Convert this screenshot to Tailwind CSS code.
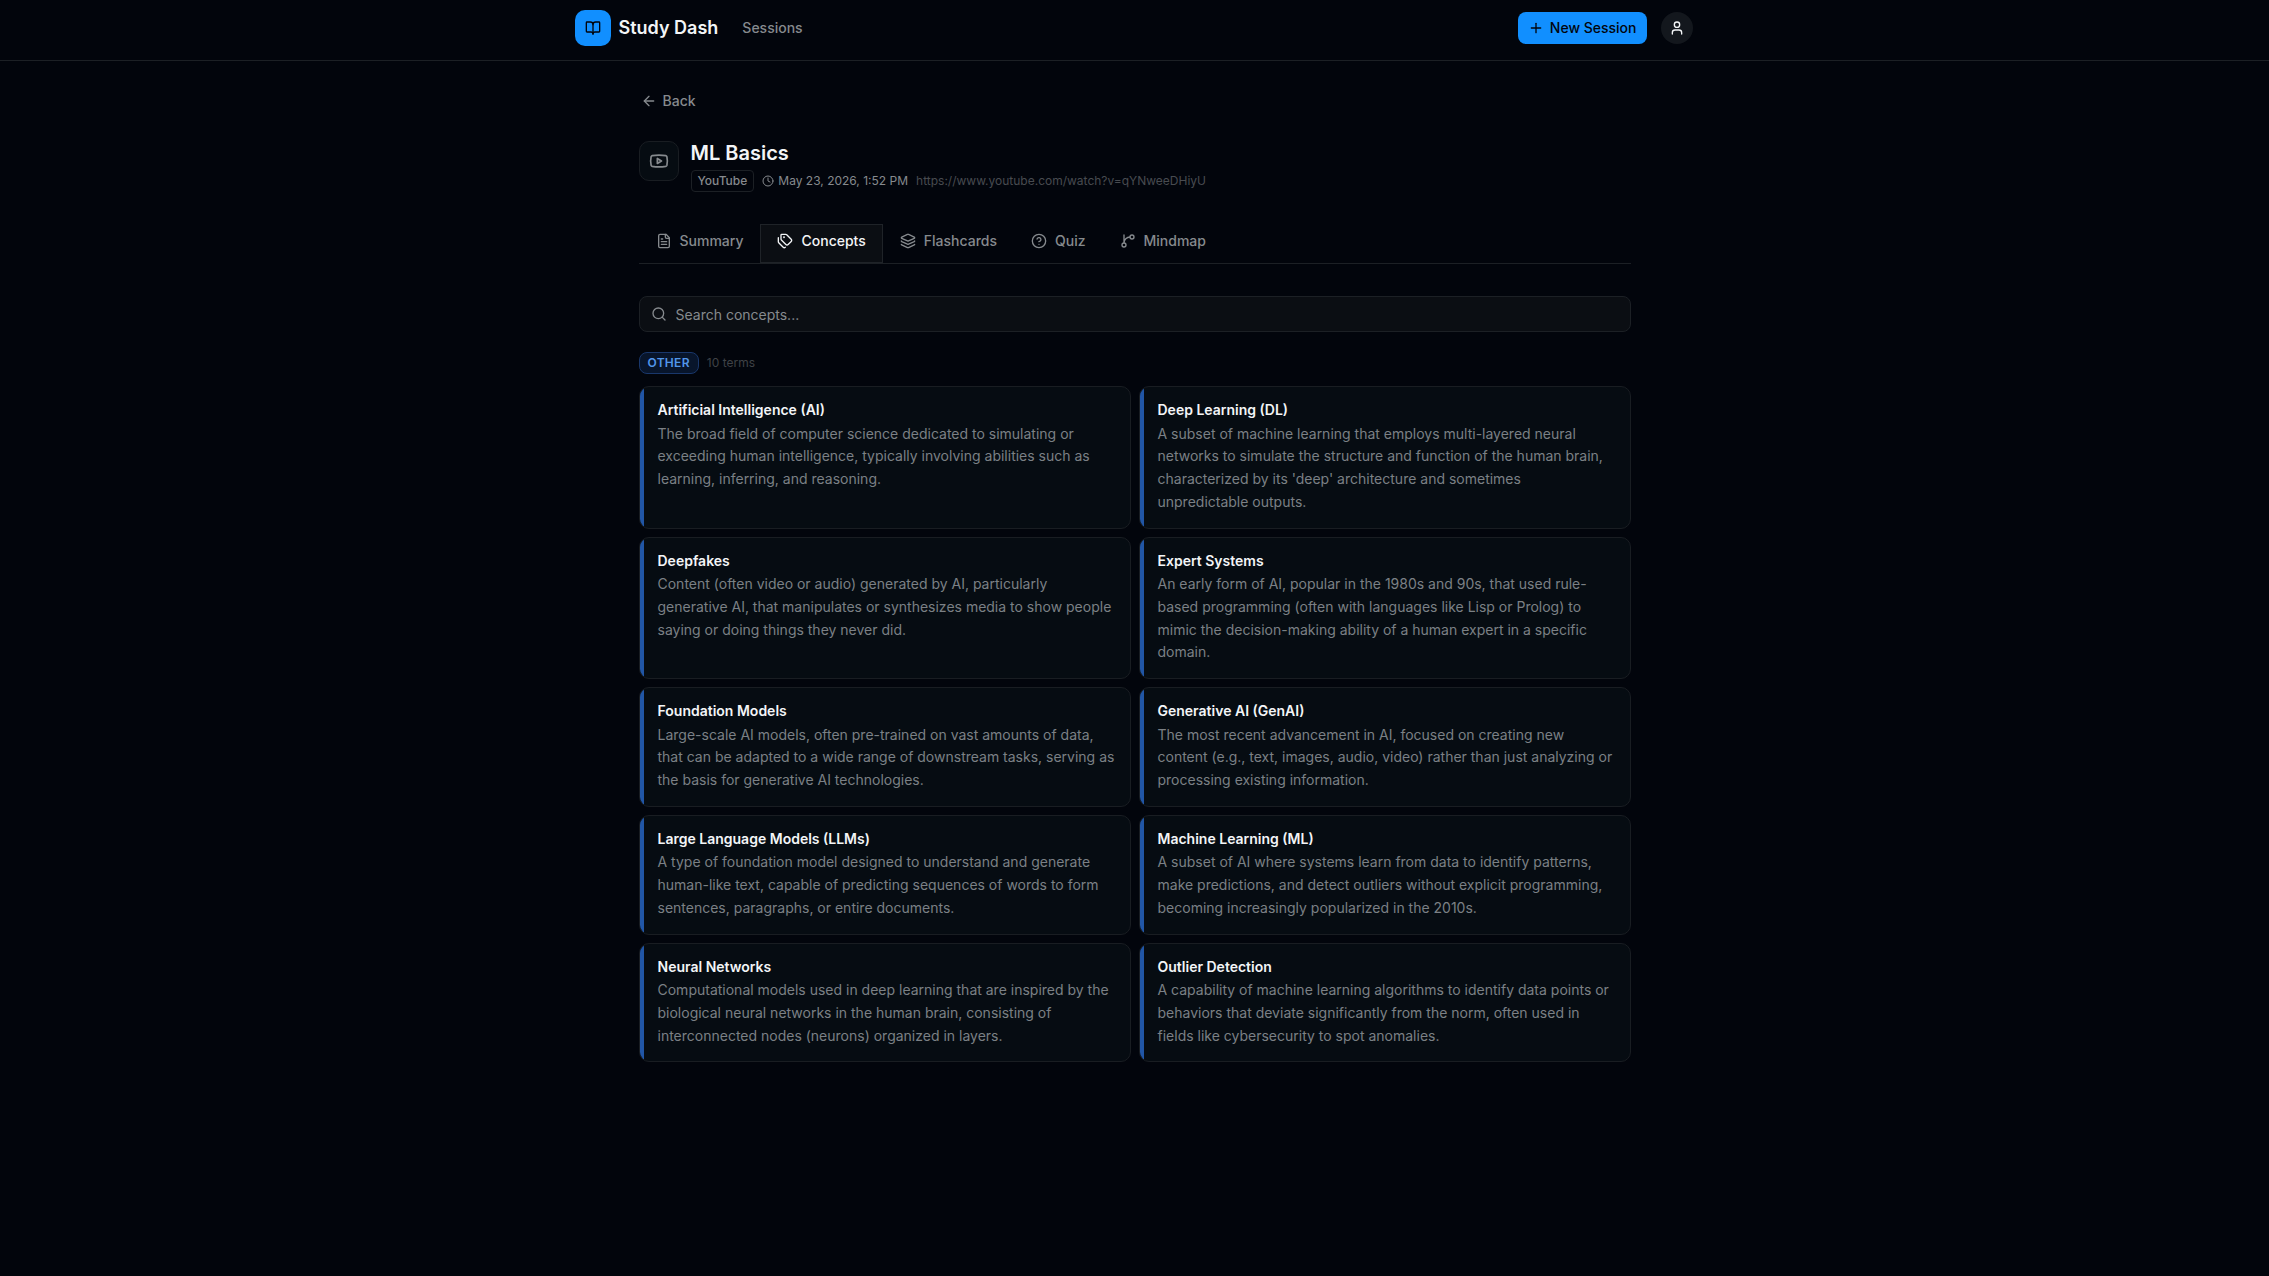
<!DOCTYPE html>
<html lang="en">
<head>
  <meta charset="UTF-8" />
  <meta name="viewport" content="width=device-width, initial-scale=1.0" />
  <title>ML Basics | Study Dash</title>
  <script src="https://cdn.jsdelivr.net/npm/@tailwindcss/browser@4"></script>
</head>
<body class="min-h-screen bg-[#02050c] font-['Inter',sans-serif] text-sm text-[#868a8e] antialiased">

  <!-- Navbar -->
  <header class="border-b border-[#1c2025] pb-1">
    <div class="max-w-6xl mx-auto h-14 pl-4 pr-[18px] flex items-center justify-between">
      <div class="flex items-center gap-6">
        <a href="#" class="flex items-center gap-2 text-lg font-semibold text-[#f3f5f7]">
          <span class="size-9 rounded-[10px] bg-[#118fff] text-[#02050c] flex items-center justify-center">
            <svg class="size-4" viewBox="0 0 24 24" fill="none" stroke="currentColor" stroke-width="2" stroke-linecap="round" stroke-linejoin="round"><path d="M12 7v14"/><path d="M3 18a1 1 0 0 1-1-1V4a1 1 0 0 1 1-1h5a4 4 0 0 1 4 4 4 4 0 0 1 4-4h5a1 1 0 0 1 1 1v13a1 1 0 0 1-1 1h-6a3 3 0 0 0-3 3 3 3 0 0 0-3-3z"/></svg>
          </span>
          Study Dash
        </a>
        <nav>
          <a href="#" class="font-medium hover:text-white">Sessions</a>
        </nav>
      </div>
      <div class="flex items-center gap-3.5">
        <button class="h-8 px-2.5 rounded-lg bg-[#118fff] text-[#02050c] font-medium flex items-center gap-1.5">
          <svg class="size-4" viewBox="0 0 24 24" fill="none" stroke="currentColor" stroke-width="2" stroke-linecap="round" stroke-linejoin="round"><path d="M5 12h14"/><path d="M12 5v14"/></svg>
          New Session
        </button>
        <button aria-label="Account" class="size-8 rounded-full bg-[#13171d] text-[#f3f5f7] flex items-center justify-center">
          <svg class="size-4" viewBox="0 0 24 24" fill="none" stroke="currentColor" stroke-width="2" stroke-linecap="round" stroke-linejoin="round"><path d="M19 21v-2a4 4 0 0 0-4-4H9a4 4 0 0 0-4 4v2"/><circle cx="12" cy="7" r="4"/></svg>
        </button>
      </div>
    </div>
  </header>

  <main class="max-w-5xl mx-auto px-4 py-6">
    <a href="#" class="w-fit h-8 flex items-center gap-1.5 px-0.5 font-medium hover:text-white">
      <svg class="size-4" viewBox="0 0 24 24" fill="none" stroke="currentColor" stroke-width="2" stroke-linecap="round" stroke-linejoin="round"><path d="m12 19-7-7 7-7"/><path d="M19 12H5"/></svg>
      Back
    </a>

    <!-- Session title -->
    <div class="mt-6 flex items-start gap-3">
      <div class="size-10 rounded-[10px] border border-[#191d22] bg-[#060c12] flex items-center justify-center">
        <svg class="size-5" viewBox="0 0 24 24" fill="none" stroke="currentColor" stroke-width="2" stroke-linecap="round" stroke-linejoin="round"><path d="M2.5 17a24.12 24.12 0 0 1 0-10 2 2 0 0 1 1.4-1.4 49.56 49.56 0 0 1 16.2 0A2 2 0 0 1 21.5 7a24.12 24.12 0 0 1 0 10 2 2 0 0 1-1.4 1.4 49.55 49.55 0 0 1-16.2 0A2 2 0 0 1 2.5 17"/><path d="m10 15 5-3-5-3z"/></svg>
      </div>
      <div>
        <h1 class="text-xl leading-tight font-semibold text-[#f3f5f7]">ML Basics</h1>
        <div class="mt-1 flex items-center gap-2 text-xs">
          <span class="h-[22px] px-1.5 rounded-sm border border-[#1c2025] font-medium flex items-center">YouTube</span>
          <span class="flex items-center gap-1">
            <svg class="size-3" viewBox="0 0 24 24" fill="none" stroke="currentColor" stroke-width="2" stroke-linecap="round" stroke-linejoin="round"><circle cx="12" cy="12" r="10"/><path d="M12 6v6l4 2"/></svg>
            May 23, 2026, 1:52 PM
          </span>
          <a href="#" class="text-[#484b50]">https://www.youtube.com/watch?v=qYNweeDHiyU</a>
        </div>
      </div>
    </div>

    <!-- Tabs -->
    <nav class="mt-8 flex border-b border-[#1c2025] font-medium">
      <button class="h-[39px] px-4 pb-1.5 border border-transparent flex items-center gap-2">
        <svg class="size-4" viewBox="0 0 24 24" fill="none" stroke="currentColor" stroke-width="2" stroke-linecap="round" stroke-linejoin="round"><path d="M15 2H6a2 2 0 0 0-2 2v16a2 2 0 0 0 2 2h12a2 2 0 0 0 2-2V7Z"/><path d="M14 2v4a2 2 0 0 0 2 2h4"/><path d="M10 9H8"/><path d="M16 13H8"/><path d="M16 17H8"/></svg>
        Summary
      </button>
      <button class="h-[39px] px-4 pb-1.5 border border-[#1f2328] bg-[#0b0e13] text-[#f3f5f7] flex items-center gap-2">
        <svg class="size-4" viewBox="0 0 24 24" fill="none" stroke="currentColor" stroke-width="2" stroke-linecap="round" stroke-linejoin="round"><path d="M13.172 2a2 2 0 0 1 1.414.586l6.71 6.71a2.4 2.4 0 0 1 0 3.408l-4.592 4.592a2.4 2.4 0 0 1-3.408 0l-6.71-6.71A2 2 0 0 1 6 9.172V3a1 1 0 0 1 1-1z"/><path d="M2 7v6.172a2 2 0 0 0 .586 1.414l6.71 6.71a2.4 2.4 0 0 0 3.191.193"/><circle cx="10.5" cy="6.5" r=".5" fill="currentColor"/></svg>
        Concepts
      </button>
      <button class="h-[39px] px-4 pb-1.5 border border-transparent flex items-center gap-2">
        <svg class="size-4" viewBox="0 0 24 24" fill="none" stroke="currentColor" stroke-width="2" stroke-linecap="round" stroke-linejoin="round"><path d="M12.83 2.18a2 2 0 0 0-1.66 0L2.6 6.08a1 1 0 0 0 0 1.83l8.58 3.91a2 2 0 0 0 1.66 0l8.58-3.9a1 1 0 0 0 0-1.83z"/><path d="M2 12a1 1 0 0 0 .58.91l8.6 3.91a2 2 0 0 0 1.65 0l8.58-3.9A1 1 0 0 0 22 12"/><path d="M2 17a1 1 0 0 0 .58.91l8.6 3.91a2 2 0 0 0 1.65 0l8.58-3.9A1 1 0 0 0 22 17"/></svg>
        Flashcards
      </button>
      <button class="h-[39px] px-4 pb-1.5 border border-transparent flex items-center gap-2">
        <svg class="size-4" viewBox="0 0 24 24" fill="none" stroke="currentColor" stroke-width="2" stroke-linecap="round" stroke-linejoin="round"><circle cx="12" cy="12" r="10"/><path d="M9.09 9a3 3 0 0 1 5.83 1c0 2-3 3-3 3"/><path d="M12 17h.01"/></svg>
        Quiz
      </button>
      <button class="h-[39px] px-4 pb-1.5 border border-transparent flex items-center gap-2">
        <svg class="size-4" viewBox="0 0 24 24" fill="none" stroke="currentColor" stroke-width="2" stroke-linecap="round" stroke-linejoin="round"><path d="M15 6a9 9 0 0 0-9 9V3"/><circle cx="18" cy="6" r="3"/><circle cx="6" cy="18" r="3"/></svg>
        Mindmap
      </button>
    </nav>

    <!-- Search -->
    <div class="relative mt-8">
      <svg class="absolute left-3 top-2.5 size-4" viewBox="0 0 24 24" fill="none" stroke="currentColor" stroke-width="2" stroke-linecap="round" stroke-linejoin="round"><circle cx="11" cy="11" r="8"/><path d="m21 21-4.3-4.3"/></svg>
      <input type="text" aria-label="Search concepts" placeholder="Search concepts..." class="w-full h-9 pl-9 pr-3 rounded-lg border border-[#1c2025] bg-[#0b0e13] text-[#f3f5f7] placeholder:text-[#868a8e] outline-none block" />
    </div>

    <div class="mt-5 flex items-center gap-2 text-xs">
      <span class="h-[22px] px-2 rounded-lg border border-[#19376b] bg-[#08152b] text-[#5296ea] font-semibold tracking-wide flex items-center">OTHER</span>
      <span class="text-[#3f4246]">10 terms</span>
    </div>

    <div class="mt-3 grid grid-cols-1 md:grid-cols-2 gap-2" id="concepts"></div>
  </main>

  <script>
    const concepts = [
      { term: "Artificial Intelligence (AI)", text: "The broad field of computer science dedicated to simulating or exceeding human intelligence, typically involving abilities such as learning, inferring, and reasoning." },
      { term: "Deep Learning (DL)", text: "A subset of machine learning that employs multi-layered neural networks to simulate the structure and function of the human brain, characterized by its 'deep' architecture and sometimes unpredictable outputs." },
      { term: "Deepfakes", text: "Content (often video or audio) generated by AI, particularly generative AI, that manipulates or synthesizes media to show people saying or doing things they never did." },
      { term: "Expert Systems", text: "An early form of AI, popular in the 1980s and 90s, that used rule-based programming (often with languages like Lisp or Prolog) to mimic the decision-making ability of a human expert in a specific domain." },
      { term: "Foundation Models", text: "Large-scale AI models, often pre-trained on vast amounts of data, that can be adapted to a wide range of downstream tasks, serving as the basis for generative AI technologies." },
      { term: "Generative AI (GenAI)", text: "The most recent advancement in AI, focused on creating new content (e.g., text, images, audio, video) rather than just analyzing or processing existing information." },
      { term: "Large Language Models (LLMs)", text: "A type of foundation model designed to understand and generate human-like text, capable of predicting sequences of words to form sentences, paragraphs, or entire documents." },
      { term: "Machine Learning (ML)", text: "A subset of AI where systems learn from data to identify patterns, make predictions, and detect outliers without explicit programming, becoming increasingly popularized in the 2010s." },
      { term: "Neural Networks", text: "Computational models used in deep learning that are inspired by the biological neural networks in the human brain, consisting of interconnected nodes (neurons) organized in layers." },
      { term: "Outlier Detection", text: "A capability of machine learning algorithms to identify data points or behaviors that deviate significantly from the norm, often used in fields like cybersecurity to spot anomalies." }
    ];

    const container = document.getElementById("concepts");

    concepts.forEach((item) => {
      const card = document.createElement("article");
      card.className = "flex overflow-hidden rounded-[10px] border border-[#191d22] bg-[#060c12]";

      card.innerHTML = `
        <div class="w-1 shrink-0 bg-[#2156a6]"></div>
        <div class="p-3.5">
          <h2 class="leading-tight font-semibold text-[#f3f5f7]">${item.term}</h2>
          <p class="mt-1 leading-relaxed text-[#7b8085]">${item.text}</p>
        </div>
      `;

      container.appendChild(card);
    });
  </script>
</body>
</html>
